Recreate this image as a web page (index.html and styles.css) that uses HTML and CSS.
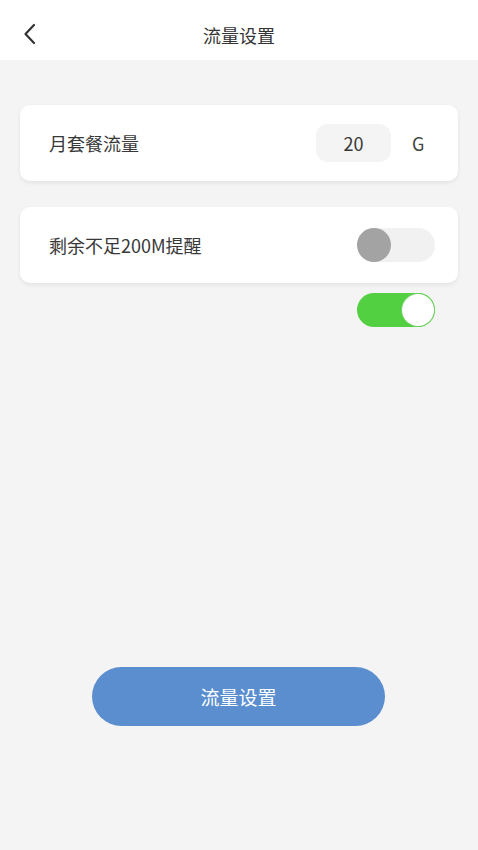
FILE: index.html
```html
<!DOCTYPE html>
<html lang="zh">
<head>
<meta charset="utf-8">
<title>流量设置</title>
<link rel="stylesheet" href="styles.css">
</head>
<body>
<header class="topbar">
  <span class="back">
    <svg width="16" height="22" viewBox="0 0 16 22"><path d="M12 2 L3.5 11 L12 20" fill="none" stroke="#333" stroke-width="2.2" stroke-linecap="round" stroke-linejoin="round"/></svg>
  </span>
  <h1 class="title">流量设置</h1>
</header>
<main class="content">
  <section class="card">
    <span class="label">月套餐流量</span>
    <div class="value-group">
      <span class="input">20</span>
      <span class="unit">G</span>
    </div>
  </section>
  <section class="card card-toggle">
    <span class="label">剩余不足200M提醒</span>
    <span class="switch switch-off"><span class="knob"></span></span>
  </section>
  <div class="extra-row">
    <span class="switch switch-on"><span class="knob"></span></span>
  </div>
  <div class="btn-row">
    <button class="primary">流量设置</button>
  </div>
</main>
</body>
</html>
```
FILE: styles.css
```css
* { box-sizing: border-box; }
html, body { margin: 0; padding: 0; }
body {
  width: 478px;
  height: 850px;
  background: #f4f4f4;
  font-family: "Noto Sans CJK SC", "Noto Sans", sans-serif;
  color: #333;
}
.topbar {
  height: 60px;
  background: #fff;
  display: flex;
  align-items: center;
  justify-content: center;
  position: relative;
}
.back {
  position: absolute;
  left: 22px;
  top: 23px;
  width: 16px;
  height: 22px;
  display: block;
}
.back svg { display: block; }
.title {
  margin: 0;
  font-size: 18px;
  font-weight: 400;
  color: #333;
  line-height: 1;
  padding-top: 10px;
}
.content {
  padding: 45px 20px 0;
  display: flex;
  flex-direction: column;
}
.card {
  height: 76px;
  background: #fff;
  border-radius: 10px;
  box-shadow: 0 2px 4px rgba(0,0,0,0.07);
  display: flex;
  align-items: center;
  justify-content: space-between;
  padding: 0 32px 0 29px;
}
.card-toggle {
  margin-top: 26px;
  padding-right: 23px;
}
.label {
  font-size: 18px;
  color: #383838;
}
.value-group {
  display: flex;
  align-items: center;
  gap: 21px;
}
.input {
  width: 75px;
  height: 38px;
  border-radius: 12px;
  background: #f4f4f4;
  display: flex;
  align-items: center;
  justify-content: center;
  font-size: 18px;
  color: #383838;
}
.unit {
  font-size: 18px;
  color: #444;
  width: 14px;
}
.switch {
  width: 78px;
  height: 34px;
  border-radius: 17px;
  display: flex;
  align-items: center;
}
.switch-off {
  background: #f1f1f1;
}
.switch-off .knob {
  width: 34px;
  height: 34px;
  border-radius: 50%;
  background: #a3a3a3;
}
.switch-on {
  background: #53cf42;
  justify-content: flex-end;
  padding: 1px;
}
.switch-on .knob {
  width: 32px;
  height: 32px;
  border-radius: 50%;
  background: #fff;
  box-shadow: 0 0 0 1px #6cd35f;
}
.extra-row {
  margin-top: 10px;
  display: flex;
  justify-content: flex-end;
  padding-right: 23px;
}
.btn-row {
  margin-top: 340px;
  display: flex;
  padding-left: 72px;
}
.primary {
  width: 293px;
  height: 59px;
  border: none;
  border-radius: 30px;
  background: #5a8ecf;
  color: #fff;
  font-family: "Noto Sans CJK SC", "Noto Sans", sans-serif;
  font-size: 19px;
  padding: 0;
}
```
